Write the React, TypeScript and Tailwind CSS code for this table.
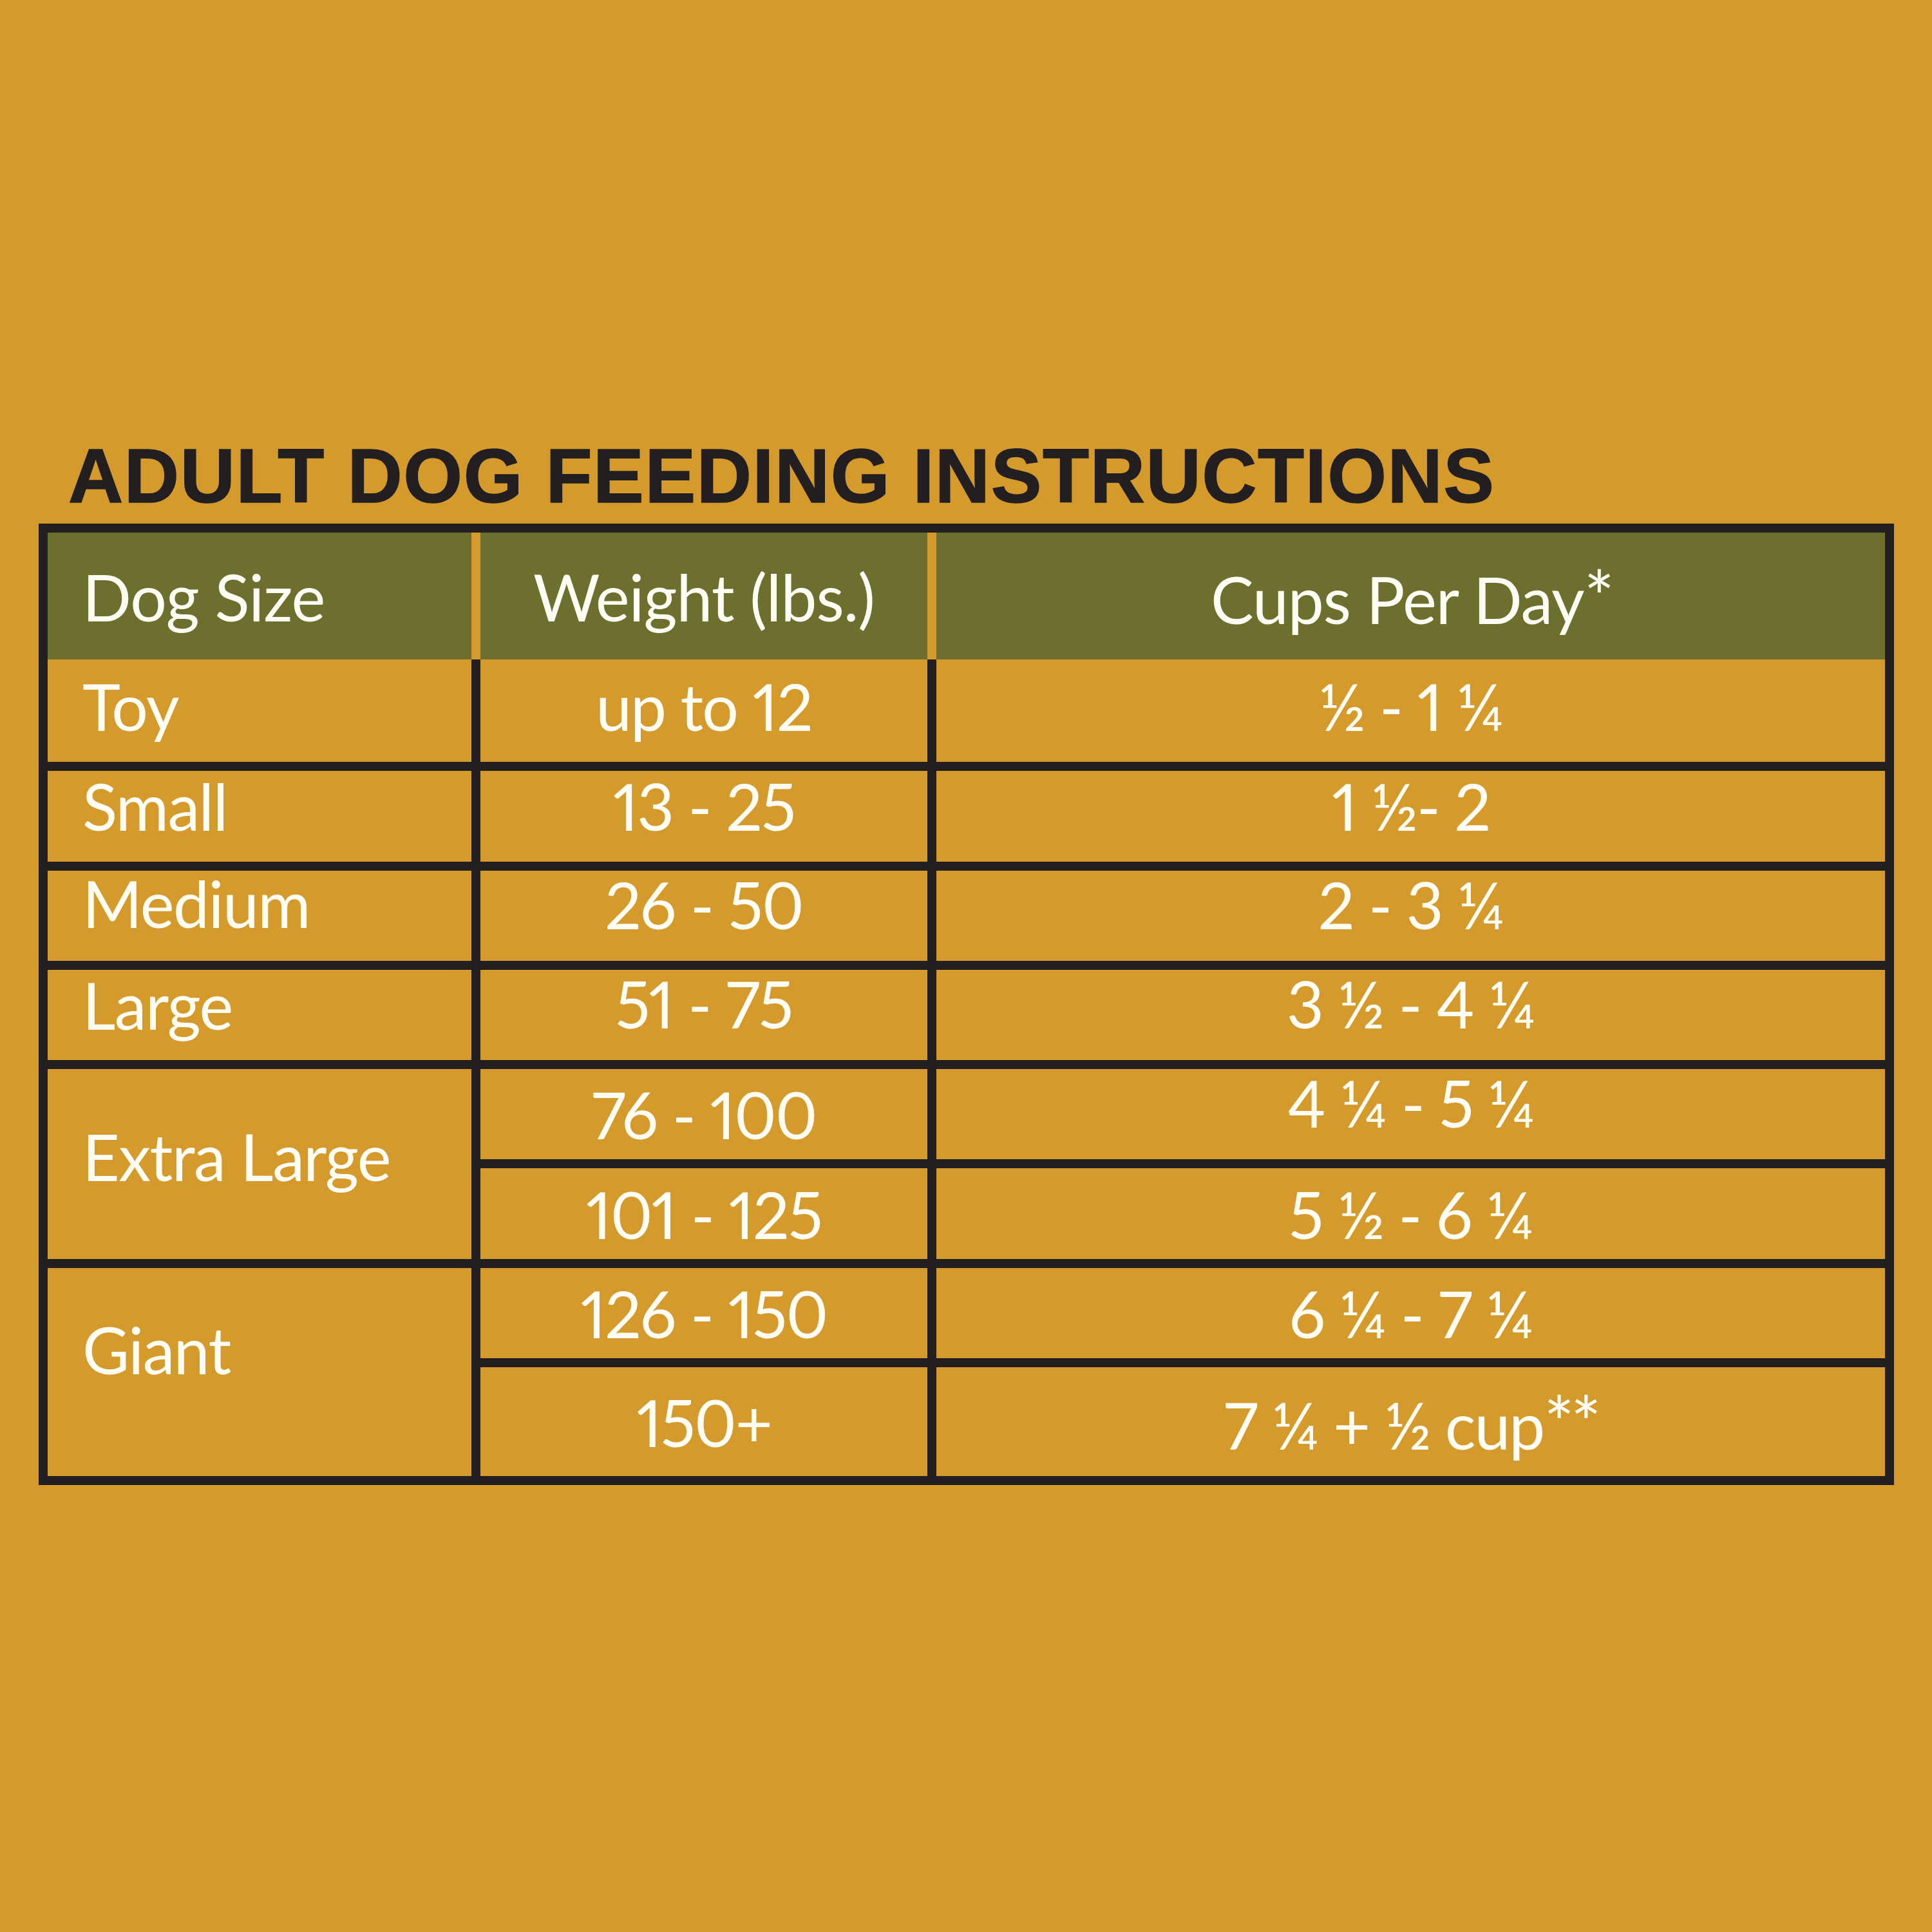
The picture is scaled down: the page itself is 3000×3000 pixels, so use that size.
import React from "react";

const body = "font-['Lato',sans-serif] text-[100px] leading-none text-[#fffdf4] proportional-nums";

function Cell({
  children,
  center,
  pb,
  className = "",
}: {
  children: React.ReactNode;
  center?: boolean;
  pb: string;
  className?: string;
}) {
  return (
    <div
      className={`bg-[#d49a2b] flex items-center ${center ? "justify-center tracking-[-2px]" : "pl-[54px] tracking-[-1.5px]"} ${pb} ${className}`}
    >
      <span className="whitespace-nowrap">{children}</span>
    </div>
  );
}

const Ast = ({ n }: { n: number }) => (
  <span className="text-[112px] tracking-[-6px]">{"*".repeat(n)}</span>
);

export default function App() {
  return (
    <div className="w-[3000px] h-[3000px] bg-[#d49a2b] pt-[680px]">
      <h1 className="ml-[106px] font-['Liberation_Sans',Arial,sans-serif] font-bold text-[118px] leading-none tracking-[1.6px] text-[#231f20] whitespace-nowrap [-webkit-text-stroke:1.5px_#231f20]">
        ADULT DOG FEEDING INSTRUCTIONS
      </h1>
      <div className={`mt-[15px] ml-[60px] w-[2881px] border-[14px] border-[#231f20] bg-[#231f20] ${body}`}>
        <div className="grid grid-cols-[658px_694px_1473px] gap-x-[14px] bg-[#d49a2b] h-[197px] tracking-[-1px]">
          <div className="bg-[#6c6f2d] flex items-center pl-[54px]">
            <span>Dog Size</span>
          </div>
          <div className="bg-[#6c6f2d] flex items-center justify-center">
            <span>Weight (lbs.)</span>
          </div>
          <div className="bg-[#6c6f2d] flex items-center justify-center">
            <span>
              Cups Per Day<Ast n={1} />
            </span>
          </div>
        </div>
        <div className="grid grid-cols-[658px_694px_1473px] grid-rows-[159px_141px_140px_140px_140px_141px_140px_169px] gap-x-[14px] gap-y-[14px]">
          <Cell pb="pb-[16px]">Toy</Cell>
          <Cell center pb="pb-[16px]">up to 12</Cell>
          <Cell center pb="pb-[16px]">½ - 1 ¼</Cell>

          <Cell pb="pb-[34px]">Small</Cell>
          <Cell center pb="pb-[34px]">13 - 25</Cell>
          <Cell center pb="pb-[34px]">1 ½- 2</Cell>

          <Cell pb="pb-[40px]">Medium</Cell>
          <Cell center pb="pb-[36px]">26 - 50</Cell>
          <Cell center pb="pb-[36px]">2 - 3 ¼</Cell>

          <Cell pb="pb-[32px]">Large</Cell>
          <Cell center pb="pb-[36px]">51 - 75</Cell>
          <Cell center pb="pb-[36px]">3 ½ - 4 ¼</Cell>

          <Cell pb="pb-[26px]" className="row-span-2">Extra Large</Cell>
          <Cell center pb="pb-0">76 - 100</Cell>
          <Cell center pb="pb-[36px]">4 ¼ - 5 ¼</Cell>
          <Cell center pb="pb-0">101 - 125</Cell>
          <Cell center pb="pb-0">5 ½ - 6 ¼</Cell>

          <Cell pb="pb-[72px]" className="row-span-2">Giant</Cell>
          <Cell center pb="pb-0">126 - 150</Cell>
          <Cell center pb="pb-0">6 ¼ - 7 ¼</Cell>
          <Cell center pb="pb-0">150+</Cell>
          <Cell center pb="pb-0">
            7 ¼ + ½ cup<Ast n={2} />
          </Cell>
        </div>
      </div>
    </div>
  );
}
